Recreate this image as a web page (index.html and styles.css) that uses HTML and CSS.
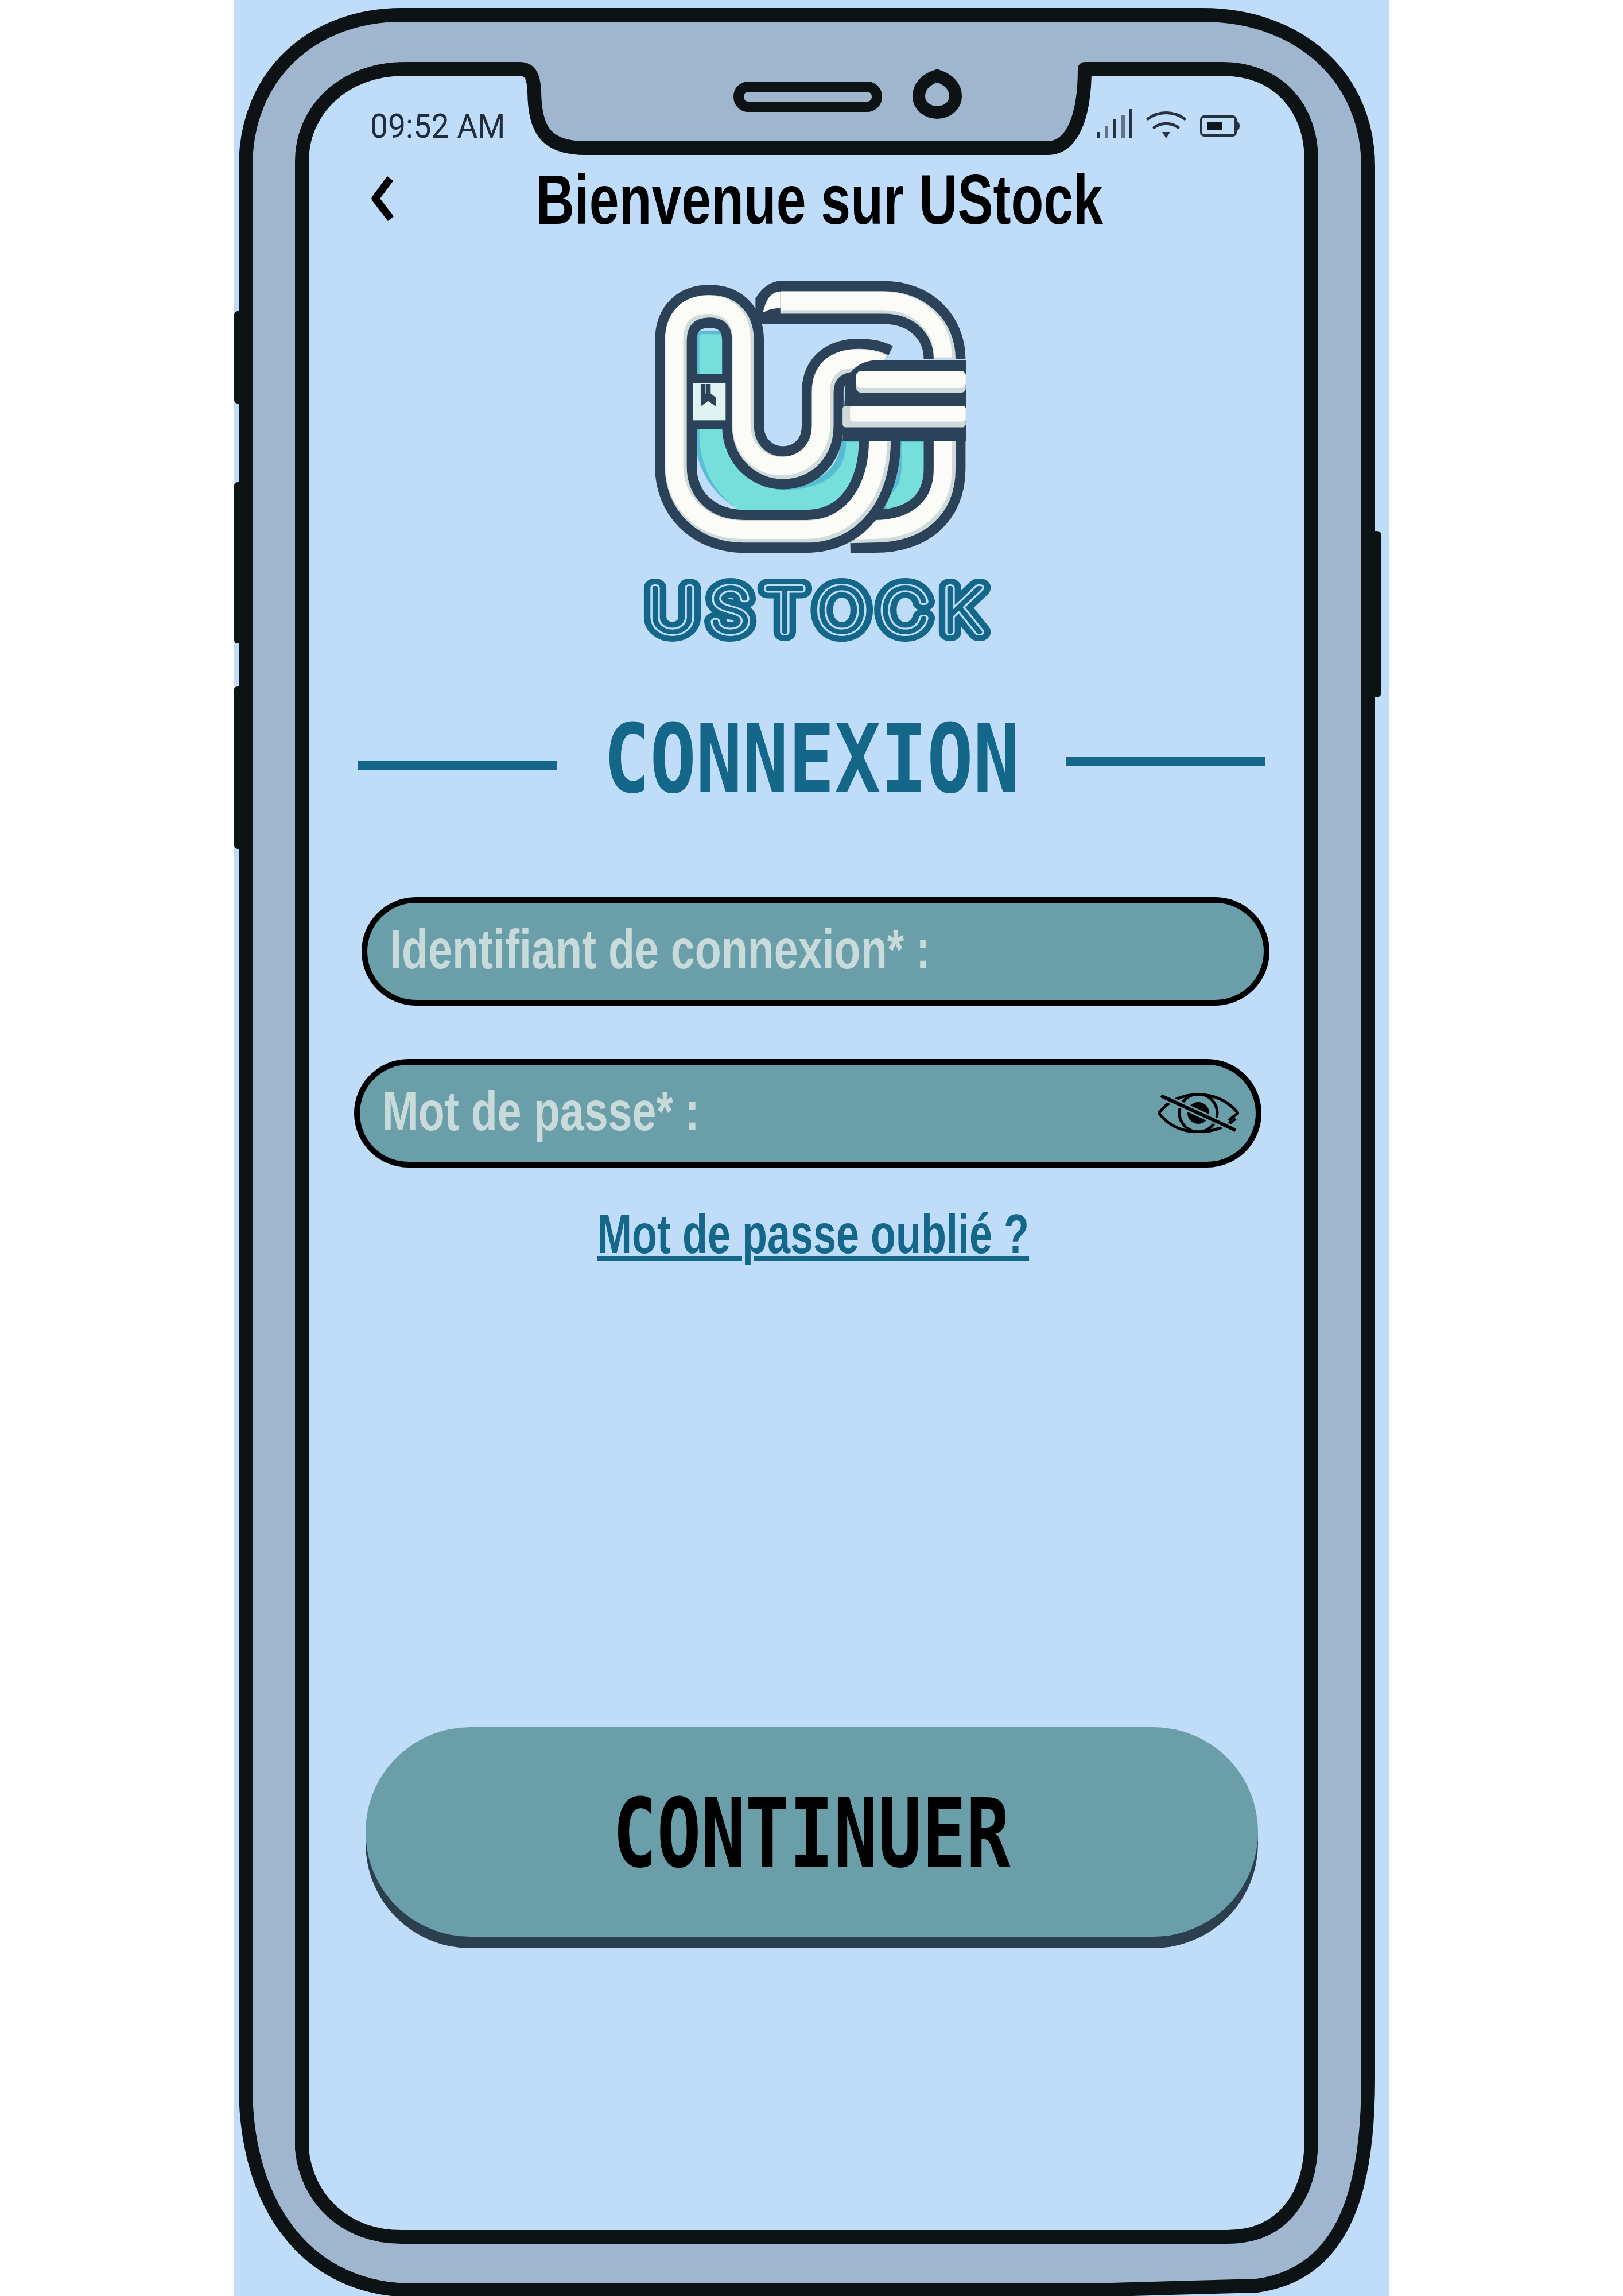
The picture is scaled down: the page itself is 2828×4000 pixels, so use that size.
FILE: index.html
```html
<!DOCTYPE html>
<html lang="fr">
<head>
  <meta charset="UTF-8">
  <title>Connexion - UStock</title>
  <link rel="stylesheet" href="styles.css">
</head>
<body>
  <main class="canvas">
    <!-- phone shell, drawn in page coordinates -->
    <svg class="frame" viewBox="408 0 2012 4000" aria-hidden="true">
      <g class="ink">
        <rect x="408" y="542" width="30" height="161" rx="6"/>
        <rect x="408" y="840" width="30" height="281" rx="6"/>
        <rect x="408" y="1195" width="30" height="284" rx="6"/>
        <rect x="2376" y="925" width="31" height="290" rx="8"/>
      </g>
      <path class="shell" d="M700 26H2095C2270 26 2384 140 2384 290V3620C2384 3800 2350 3960 2190 3982L1900 3990H720C540 3990 430 3850 428 3640V290C428 130 545 26 700 26Z"/>
      <path class="display" d="M706 120H905C925 120 930 135 931 160C932 225 950 258 1020 258H1825C1870 258 1890 200 1890 120H2128C2230 120 2285 190 2285 280V3725C2285 3820 2240 3897 2138 3897H700C600 3897 534 3830 526 3744V280C527 190 600 120 706 120Z"/>
      <rect class="speaker" x="1287" y="151" width="241" height="35" rx="17"/>
      <path class="speaker camera" d="M1633 132C1652 138 1665 150 1665 168A32 28 0 0 1 1601 168C1601 150 1614 138 1633 132Z"/>
    </svg>

    <div class="screen">
      <div class="status">
        <span class="time">09:52 AM</span>
        <div class="status-icons">
          <svg class="signal" viewBox="0 0 62 52">
            <rect x="1" y="41" width="5" height="11" fill="#26333f"/>
            <rect x="14" y="30" width="6" height="22" fill="#5f7488"/>
            <rect x="28" y="19" width="5" height="33" fill="#26333f"/>
            <rect x="42" y="11" width="7" height="41" fill="#5f7488"/>
            <rect x="57" y="1" width="4" height="51" fill="#26333f"/>
          </svg>
          <svg class="wifi" viewBox="0 0 70 50">
            <path d="M3 15C22 1 48 1 67 15M14 30C27 21 43 21 56 30" fill="none" stroke="#26333f" stroke-width="5" stroke-linecap="round"/>
            <path d="M28 38H42L35 49Z" fill="#26333f"/>
          </svg>
          <svg class="battery" viewBox="0 0 69 39">
            <rect x="2" y="3" width="60" height="33" rx="5" fill="none" stroke="#26333f" stroke-width="4"/>
            <rect x="12" y="12" width="27" height="15" fill="#10171d"/>
            <path d="M64 13C68 15 68 24 64 26" fill="none" stroke="#26333f" stroke-width="4"/>
          </svg>
        </div>
      </div>

      <header class="topbar">
        <svg class="back" viewBox="0 0 40 81"><path d="M33 6L7 41L34 76" fill="none" stroke="#000" stroke-width="13" stroke-linejoin="round"/></svg>
        <h1 class="title"><span>Bienvenue sur UStock</span></h1>
      </header>

      <svg class="logo" viewBox="0 0 1568 1568" preserveAspectRatio="none" role="img" aria-label="UStock">
        <defs>
          <path id="tube-top" d="M640 150H1060C1210 150 1305 250 1305 370"/>
          <path id="tube-low" d="M1305 680V800C1305 950 1200 1043 1020 1043L925 1045"/>
          <path id="tube-main" d="M1045 680C1045 900 930 1043 750 1043H500C330 1043 225 930 225 790V300C225 210 280 165 360 165C440 165 495 210 495 300V630C495 730 570 795 655 795C745 795 815 730 815 630V500C815 410 880 375 960 375C1000 375 1030 380 1060 395"/>
          <path id="channel-left" d="M360 260V640C360 820 480 930 640 930C800 930 950 860 950 680"/>
          <path id="channel-right" d="M1172 680V780C1172 870 1130 930 1060 960"/>
        </defs>
        <use href="#channel-left" class="teal-deep"/>
        <use href="#channel-right" class="teal-deep"/>
        <use href="#channel-left" class="teal"/>
        <use href="#channel-right" class="teal"/>
        <g class="tube">
          <use href="#tube-top" class="t-dark"/><use href="#tube-top" class="t-grey"/><use href="#tube-top" class="t-white"/>
          <use href="#tube-low" class="t-dark"/><use href="#tube-low" class="t-grey"/><use href="#tube-low" class="t-white"/>
        </g>
        <!-- pointed end of the top tube -->
        <path fill="#2b4259" d="M545 135C565 100 600 68 645 66V234H545Z"/>
        <path fill="#fbfbf7" d="M575 190C585 150 600 108 645 108V172C615 172 590 180 575 190Z"/>
        <g class="tube">
          <use href="#tube-main" class="t-dark"/><use href="#tube-main" class="t-grey"/><use href="#tube-main" class="t-white"/>
        </g>
        <path fill="#2b4259" d="M905 500C905 420 960 375 1040 375H1392V690H895Z"/>
        <rect x="950" y="418" width="440" height="84" rx="18" fill="#cfdadb"/>
        <rect x="950" y="418" width="440" height="66" rx="18" fill="#fbfbf7"/>
        <rect x="895" y="553" width="495" height="84" rx="12" fill="#cfdadb"/>
        <rect x="925" y="553" width="465" height="62" rx="12" fill="#fbfbf7"/>
        <rect x="305" y="430" width="110" height="215" fill="#2b4259"/>
        <rect x="295" y="465" width="130" height="145" fill="#dff3f2"/>
        <path fill="#2b4259" d="M325 468H343V520H325ZM325 520L345 505V468H365V505L385 520V555L355 535L325 555Z"/>
        <g class="wordmark">
          <defs>
            <text id="word" x="0" y="0" textLength="1150" lengthAdjust="spacing">USTOCK</text>
          </defs>
          <g transform="translate(112 1436) scale(1.17 1)">
            <use href="#word" class="w-outer"/>
            <use href="#word" class="w-line"/>
            <use href="#word" class="w-core"/>
          </g>
        </g>
      </svg>

      <div class="heading">
        <span class="rule rule-left"></span>
        <h2 class="heading-text"><span>CONNEXION</span></h2>
        <span class="rule rule-right"></span>
      </div>

      <div class="field field-id"><span>Identifiant de connexion* :</span></div>
      <div class="field field-pass">
        <span>Mot de passe* :</span>
        <svg class="eye" viewBox="0 0 142 69">
          <path d="M2 34C20 12 44 2 71 2C98 2 122 12 140 34L124 47M18 17L2 34C20 57 44 67 71 67C98 67 122 57 136 44" fill="none" stroke="#000" stroke-width="5"/>
          <circle cx="71" cy="34" r="33" fill="none" stroke="#000" stroke-width="5"/>
          <circle cx="71" cy="34" r="19"/>
          <path d="M6 4L136 64" stroke="#6a9ea8" stroke-width="12"/>
          <path d="M6 4L136 64" stroke="#000" stroke-width="6"/>
        </svg>
      </div>

      <a class="forgot" href="#">Mot de passe oublié ?</a>

      <button class="submit"><span>CONTINUER</span></button>
    </div>
  </main>
</body>
</html>
```

FILE: styles.css
```css
body {
  margin: 0;
  background: #fff;
  display: flex;
  justify-content: center;
  font-family: "Liberation Sans", sans-serif;
}
.canvas {
  position: relative;
  width: 2012px;
  height: 4000px;
  overflow: hidden;
  background: #bfdcf9;
}
.frame {
  position: absolute;
  top: 0;
  left: 0;
  width: 2012px;
  height: 4000px;
}
.ink { fill: #0d1214; }
.shell { fill: #a0b6cf; stroke: #0d1214; stroke-width: 24; }
.display { fill: #bfdcf9; stroke: #0d1214; stroke-width: 24; stroke-linejoin: round; }
.speaker { fill: #a0b6cf; stroke: #0d1214; stroke-width: 18; }
.camera { stroke-width: 22; }

.screen {
  position: relative;
  padding-top: 184px;
}

/* status bar */
.status {
  display: flex;
  justify-content: space-between;
  align-items: center;
  height: 70px;
  width: 1515px;
  margin-left: 237px;
}
.time {
  font-family: Roboto, sans-serif;
  font-size: 60px;
  color: #1f2d3d;
  filter: blur(0.7px);
  transform-origin: left center;
  transform: scaleX(0.92);
}
.status-icons {
  display: flex;
  align-items: center;
  gap: 24px;
}
.signal { width: 62px; height: 52px; margin-top: -8px; }
.wifi { width: 70px; height: 50px; margin-top: -4px; }
.battery { width: 69px; height: 39px; }

/* top bar */
.topbar {
  display: flex;
  align-items: center;
  height: 110px;
  margin-top: 36px;
  margin-left: 239px;
}
.back { width: 40px; height: 81px; }
.title {
  width: 989px;
  margin: 0 0 0 246px;
  padding-top: 6px;
  display: flex;
  justify-content: center;
  font-size: 123px;
  line-height: 110px;
  font-weight: 700;
  color: #000;
  white-space: nowrap;
}
.title span { display: inline-block; transform: scaleX(0.757); }

/* logo */
.logo {
  display: block;
  width: 680px;
  height: 700px;
  margin-top: 60px;
  margin-left: 672px;
}
.tube use, .teal, .teal-deep { fill: none; }
.t-dark { stroke: #2b4259; stroke-width: 168; }
.t-grey { stroke: #cfdadb; stroke-width: 88; }
.t-white { stroke: #fbfbf7; stroke-width: 72; transform: translate(-6px, -6px); }
.teal-deep { stroke: #58bcd3; stroke-width: 125; }
.teal { stroke: #76dedb; stroke-width: 125; transform: translate(22px, 14px); }
.wordmark text {
  font-family: Inter, sans-serif;
  font-size: 236px;
  font-weight: 100;
}
.w-outer { fill: #15678a; stroke: #15678a; stroke-width: 72; stroke-linejoin: round; }
.w-line { fill: #bfdcf9; stroke: #bfdcf9; stroke-width: 27; stroke-linejoin: round; }
.w-core { fill: #15678a; stroke: #15678a; stroke-width: 13; stroke-linejoin: round; }

/* heading */
.heading {
  display: flex;
  height: 120px;
  width: 1582px;
  margin-top: 97px;
  margin-left: 215px;
}
.rule {
  width: 348px;
  height: 15px;
  background: #15678a;
}
.rule-left { margin-top: 69px; }
.rule-right { margin-top: 62px; }
.heading-text {
  width: 886px;
  margin: 0;
  padding-top: 6px;
  display: flex;
  justify-content: center;
  font-family: "DejaVu Sans Mono", monospace;
  font-size: 165px;
  line-height: 120px;
  font-weight: 700;
  color: #15678a;
  white-space: nowrap;
}
.heading-text span { display: inline-block; transform: scaleX(0.81); }

/* fields */
.field {
  display: flex;
  align-items: center;
  box-sizing: border-box;
  height: 189px;
  padding: 0 29px 0 39px;
  border: 10px solid #000;
  border-radius: 95px;
  background: #6a9ea8;
  font-size: 96px;
  font-weight: 700;
  color: #c9dadb;
  white-space: nowrap;
}
.field span { display: inline-block; margin-bottom: 8px; transform-origin: left center; transform: scaleX(0.785); }
.field-id { width: 1582px; margin-top: 186px; margin-left: 222px; }
.field-pass { width: 1581px; margin-top: 93px; margin-left: 209px; justify-content: space-between; }
.eye { width: 142px; height: 69px; }

.forgot {
  display: block;
  width: fit-content;
  margin-top: 71px;
  margin-left: 633px;
  font-size: 96px;
  line-height: 90px;
  font-weight: 700;
  color: #15678a;
  text-decoration: underline;
  text-decoration-thickness: 7px;
  text-underline-offset: 6px;
  white-space: nowrap;
  transform-origin: left center;
  transform: scaleX(0.75);
}

.submit {
  display: flex;
  justify-content: center;
  align-items: center;
  width: 1555px;
  height: 365px;
  margin-top: 814px;
  margin-left: 229px;
  padding: 6px 0 0;
  border: none;
  border-radius: 183px;
  background: #6a9ea8;
  box-shadow: 0 20px 0 #2b3f4e;
  font-family: "DejaVu Sans Mono", monospace;
  font-size: 165px;
  font-weight: 700;
  color: #000;
  white-space: nowrap;
}
.submit span { display: inline-block; transform: scaleX(0.775); }
```
